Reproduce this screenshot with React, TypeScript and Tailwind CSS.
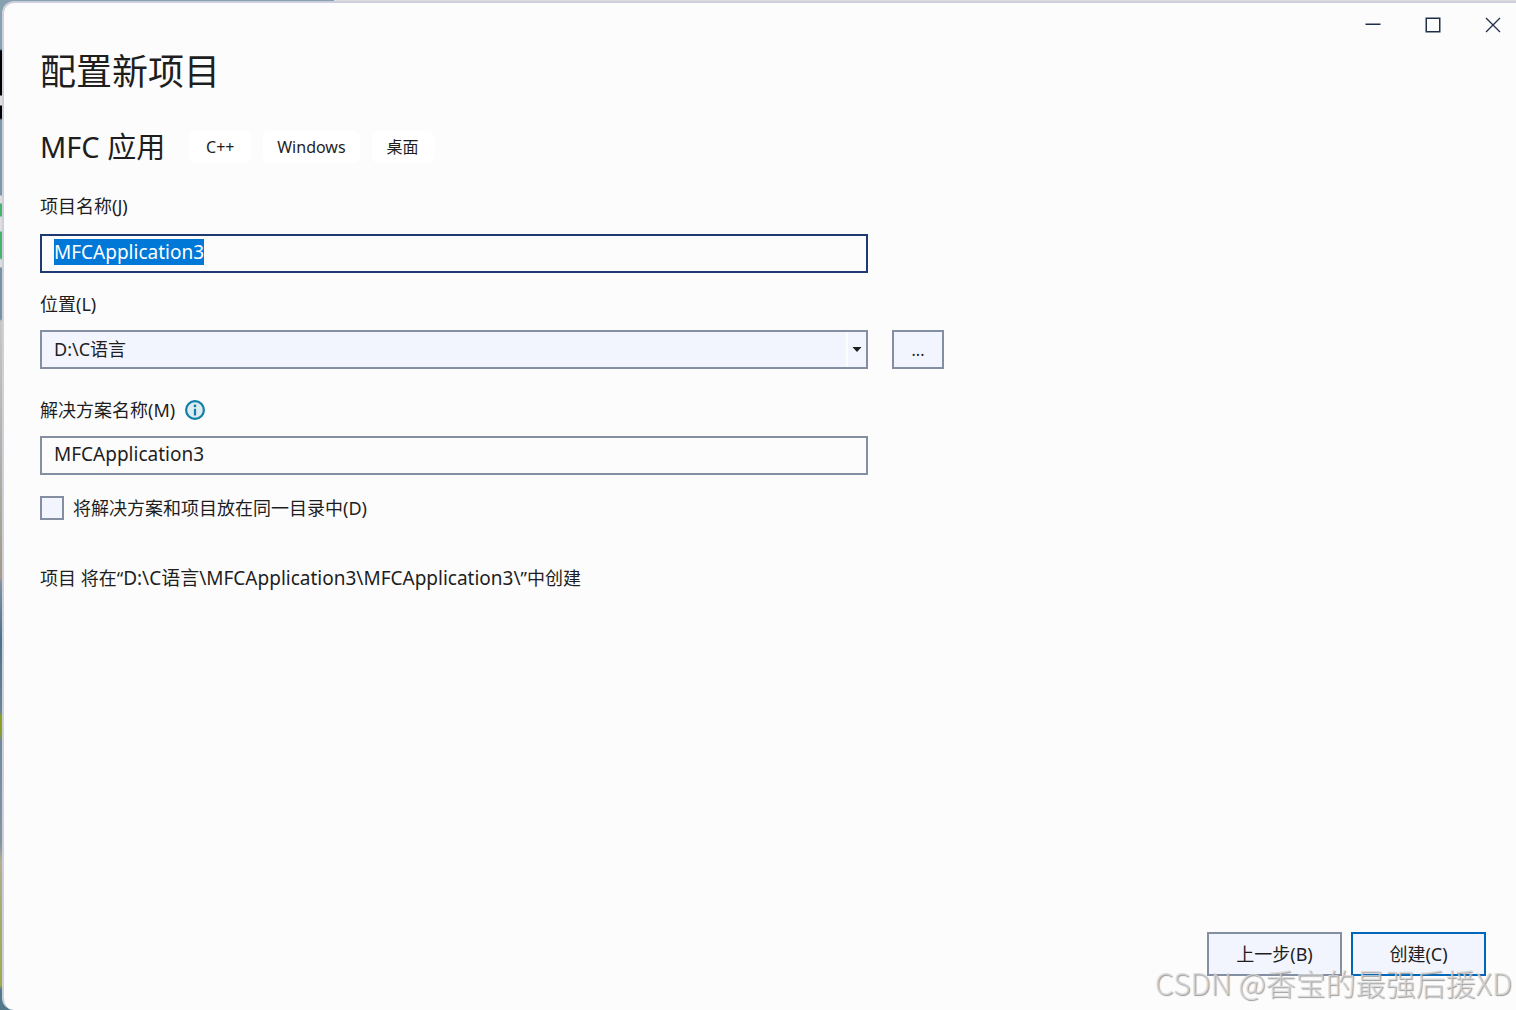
import React, { useEffect, useRef } from 'react';

const TAGS = ['C++', 'Windows', '桌面'];

const MinimizeIcon: React.FC<React.SVGProps<SVGSVGElement>> = (props) => (
  <svg viewBox="0 0 16 16" fill="none" stroke="currentColor" strokeWidth={1.5} {...props}>
    <path d="M0.500 7.250h15" />
  </svg>
);

const MaximizeIcon: React.FC<React.SVGProps<SVGSVGElement>> = (props) => (
  <svg viewBox="0 0 16 16" fill="none" stroke="currentColor" strokeWidth={1.5} {...props}>
    <rect x="1.25" y="1.250" width="13.500" height="13.500" />
  </svg>
);

const CloseIcon: React.FC<React.SVGProps<SVGSVGElement>> = (props) => (
  <svg viewBox="0 0 16 16" fill="none" stroke="currentColor" strokeWidth={1.3} {...props}>
    <path d="M1 1l14 14M15 1L1 15" />
  </svg>
);

const InfoIcon: React.FC<React.SVGProps<SVGSVGElement>> = (props) => (
  <svg viewBox="0 0 20 20" {...props}>
    <circle cx="10" cy="10" r="8.900" fill="#dcecf1" stroke="#0e7fa8" strokeWidth="2.200" />
    <circle cx="10" cy="5.900" r="1.400" fill="#0e7fa8" />
    <path d="M10 8.800v6.700" stroke="#0e7fa8" strokeWidth="2.200" />
  </svg>
);

const WindowButton: React.FC<{ label: string; children: React.ReactNode }> = ({ label, children }) => (
  <button type="button" aria-label={label} className="flex h-11 w-[46px] items-center justify-center text-[#1f2f4a]">
    {children}
  </button>
);

export default function App() {
  const nameRef = useRef<HTMLInputElement>(null);

  useEffect(() => {
    nameRef.current?.focus();
    nameRef.current?.select();
  }, []);

  return (
    <div className="flex min-h-screen flex-col bg-[linear-gradient(to_right,transparent_334px,#dedede_334px),linear-gradient(to_bottom,#87a1ae_0px,#87a1ae_49px,#000_51px,#000_95px,#ddd_96px,#ddd_105px,#000_106px,#000_118px,#7f98a6_120px,#7f98a6_195px,#ddd_196px,#ddd_203px,#45b36b_204px,#45b36b_216px,#ddd_217px,#ddd_231px,#45b36b_232px,#45b36b_258px,#ddd_260px,#ddd_267px,#7890a0_268px,#7890a0_319px,#c9c6bb_321px,#b2b0a8_450px,#a39b83_579px,#7f929c_582px,#4a728a_640px,#6b8694_712px,#8aa023_716px,#8aa023_732px,#71899a_742px,#8396a0_845px,#b3ad90_860px,#a6ab6c_920px,#a3a94a_985px,#51798a_990px)] pt-px pl-0.5 font-['Noto_Sans','Noto_Sans_CJK_SC',sans-serif] text-lg leading-6 text-[#1e1e1e]">
      <div className="flex grow flex-col rounded-l-xl border-t-2 border-l-2 border-[#cdcfdf] bg-[#fcfcfc]">
        <header className="flex h-11 justify-end gap-3.5">
          <WindowButton label="最小化"><MinimizeIcon className="size-4" /></WindowButton>
          <WindowButton label="最大化"><MaximizeIcon className="size-4" /></WindowButton>
          <WindowButton label="关闭"><CloseIcon className="size-4" /></WindowButton>
        </header>

        <main className="grow pr-6 pl-9">
          <h1 className="text-4xl leading-[50px]">配置新项目</h1>

          <div className="mt-[34px] flex items-center gap-6">
            <h2 className="text-[29px] leading-8">MFC 应用</h2>
            <ul className="flex gap-3">
              {TAGS.map((tag) => (
                <li key={tag} className="min-w-[62px] rounded-md bg-white px-3.5 py-1 text-center text-base">
                  {tag}
                </li>
              ))}
            </ul>
          </div>

          <form className="mt-[31px] max-w-[904px]">
            <div className="mr-[76px]">
              <label htmlFor="project-name" className="block">项目名称(J)</label>
              <input
                id="project-name"
                ref={nameRef}
                type="text"
                defaultValue="MFCApplication3"
                className="mt-4 block h-[39px] w-full border-2 border-[#1f3a72] px-3 pb-1 text-[19px] outline-none selection:bg-[#0078d7] selection:text-white"
              />
            </div>

            <label htmlFor="location" className="mt-[19px] block">位置(L)</label>
            <div className="mt-3.5 flex gap-6">
              <div className="relative grow">
                <select id="location" className="h-[39px] w-full appearance-none border-2 border-[#858fa3] bg-[#f2f5fd] px-3 pb-0.5">
                  <option>D:\C语言</option>
                </select>
                <span className="pointer-events-none absolute inset-y-0.5 right-0.5 flex w-5 items-center justify-center border-l-2 border-[#fcfcfc]">
                  <svg viewBox="0 0 10 5" className="h-[5px] w-2.5" fill="#1e1e1e">
                    <path d="M0.500 0h9L5 5z" />
                  </svg>
                </span>
              </div>
              <button type="button" className="h-[39px] w-[52px] border-2 border-[#858fa3] bg-[#f2f5fd] text-base">
                ...
              </button>
            </div>

            <div className="mt-[29px] mr-[76px]">
              <div className="flex items-center gap-2.5">
                <label htmlFor="solution-name">解决方案名称(M)</label>
                <InfoIcon className="size-5" />
              </div>
              <input
                id="solution-name"
                type="text"
                defaultValue="MFCApplication3"
                className="mt-3.5 block h-[39px] w-full border-2 border-[#858fa3] px-3 pb-1 text-[19px] outline-none"
              />
            </div>

            <div className="mt-[21px] flex items-center gap-[9px]">
              <input id="same-dir" type="checkbox" className="size-6 appearance-none border-2 border-[#858fa3] bg-[#f2f5fd]" />
              <label htmlFor="same-dir">将解决方案和项目放在同一目录中(D)</label>
            </div>
          </form>

          <p className="mt-[46px]">
            项目 将在“<span className="text-[19px]">D:\C语言\MFCApplication3\MFCApplication3\</span>”中创建
          </p>
        </main>

        <footer className="relative flex justify-end gap-[9px] pr-[30px] pb-[34px]">
          <button type="button" className="h-11 w-[135px] border-2 border-[#858fa3] bg-[#f2f5fd]">上一步(B)</button>
          <button type="button" className="h-11 w-[135px] border-2 border-[#0067b8] bg-[#f2f5fd]">创建(C)</button>
          <span className="pointer-events-none absolute right-1 bottom-2.5 font-['Noto_Sans_CJK_SC',sans-serif] text-[30px] leading-9 font-light text-[#d8d8d8]/80 [text-shadow:1px_1px_1px_#999]">
            CSDN @香宝的最强后援XD
          </span>
        </footer>
      </div>
    </div>
  );
}
